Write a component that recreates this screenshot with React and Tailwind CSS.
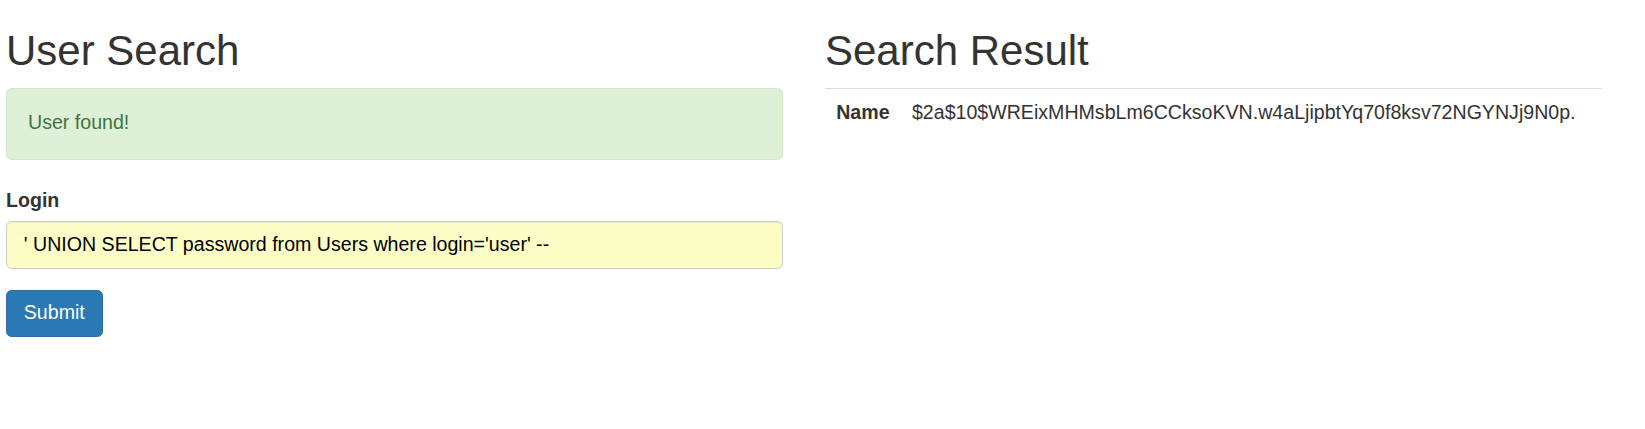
import React from "react";

const font = "font-['Liberation_Sans',Arial,sans-serif]";

const UserSearch = () => (
  <div className="w-[777px]">
    <h2 className="mt-[28px] mb-[14px] text-[42px] leading-[1.1] font-normal text-[#333]">
      User Search
    </h2>
    <div className="bg-[#dff0d8] border-[1.4px] border-[#d6e9c6] rounded-[5.6px] px-[21px] pt-[19px] pb-[23px] text-[#3c763d] text-[19.6px] leading-[28px]">
      User found!
    </div>
    <div className="mt-[26px] mb-[21px]">
      <label className="block mb-[7px] font-bold text-[19.6px] leading-[28px] text-[#333]">
        Login
      </label>
      <input
        className="block w-full h-[47.6px] px-[16.8px] py-[8.4px] text-[19.6px] text-black bg-[#fcfec5] border-[1.4px] border-[#ccc] rounded-[5.6px] shadow-[inset_0_1px_1px_rgba(0,0,0,0.075)] outline-none"
        defaultValue="' UNION SELECT password from Users where login='user' --"
      />
    </div>
    <button className="h-[47.6px] px-[16.8px] pt-0 pb-[4px] text-[19.6px] leading-[28px] text-white bg-[#2a79b5] border-[1.4px] border-[#2e6da4] rounded-[5.6px]">
      Submit
    </button>
  </div>
);

const SearchResult = () => (
  <div className="w-[777px]">
    <h2 className="mt-[28px] mb-[14px] text-[42px] leading-[1.1] font-normal text-[#333]">
      Search Result
    </h2>
    <table className="w-full border-collapse text-[19.6px] leading-[28px] text-[#333]">
      <tbody>
        <tr className="border-t-[1.4px] border-[#ddd]">
          <th className="w-[1%] whitespace-nowrap px-[11.2px] pt-[9px] pb-[13px] text-left font-bold align-top">
            Name
          </th>
          <td className="px-[11.2px] pt-[9px] pb-[13px] align-top">
            $2a$10$WREixMHMsbLm6CCksoKVN.w4aLjipbtYq70f8ksv72NGYNJj9N0p.
          </td>
        </tr>
      </tbody>
    </table>
  </div>
);

export default function App() {
  return (
    <div className={`${font} bg-white min-h-[429px] w-[1645px] pl-[6px] pr-[43px] flex gap-[42px]`}>
      <UserSearch />
      <SearchResult />
    </div>
  );
}
